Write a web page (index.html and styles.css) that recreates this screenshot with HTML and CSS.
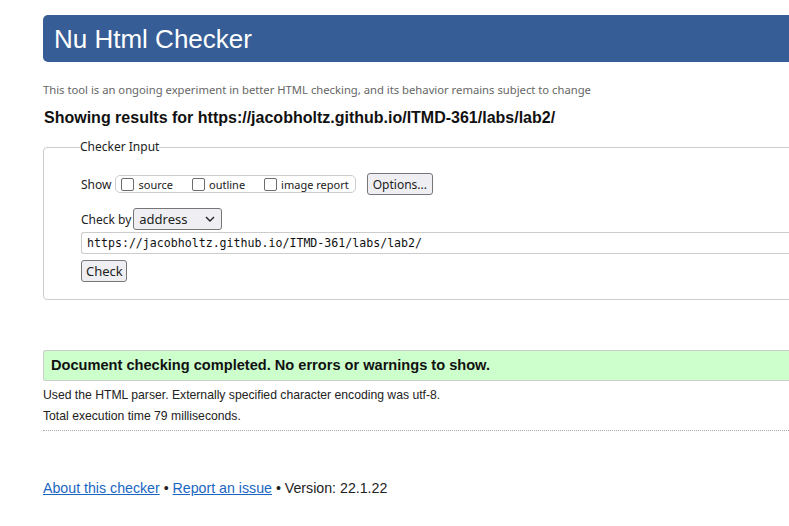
FILE: index.html
```html
<!DOCTYPE html>
<html>
<head>
<meta charset="utf-8">
<title>Nu Html Checker</title>
<link rel="stylesheet" href="styles.css">
</head>
<body>
<div class="page">
  <h1 class="banner">Nu Html Checker</h1>
  <p class="tagline">This tool is an ongoing experiment in better HTML checking, and its behavior remains subject to change</p>
  <h2 class="showing">Showing results for https://jacobholtz.github.io/ITMD-361/labs/lab2/</h2>
  <fieldset class="input-box">
    <legend>Checker Input</legend>
    <div class="row show-row">
      <span class="lbl">Show</span>
      <span class="opts">
        <label class="opt"><span class="cb"></span>source</label>
        <label class="opt"><span class="cb"></span>outline</label>
        <label class="opt"><span class="cb"></span>image report</label>
      </span>
      <span class="btn options">Options...</span>
    </div>
    <div class="row by-row">
      <span class="lbl">Check by</span>
      <span class="select">address<svg class="chev" width="10" height="6" viewBox="0 0 10 6"><path d="M1 1 L5 5 L9 1" fill="none" stroke="#222" stroke-width="1.4"/></svg></span>
    </div>
    <div class="url">https://jacobholtz.github.io/ITMD-361/labs/lab2/</div>
    <div class="row"><span class="btn check">Check</span></div>
  </fieldset>
  <p class="success">Document checking completed. No errors or warnings to show.</p>
  <p class="details">Used the HTML parser. Externally specified character encoding was utf-8.</p>
  <p class="details">Total execution time 79 milliseconds.</p>
  <hr class="dotted">
  <p class="footer"><a href="#">About this checker</a> &bull; <a href="#">Report an issue</a> &bull; Version: 22.1.22</p>
</div>
</body>
</html>
```
FILE: styles.css
```css
html, body { margin: 0; padding: 0; overflow: hidden; background: #fff; }
body { font-family: "Liberation Sans", Arial, sans-serif; color: #222; }
.page { width: 1000px; padding: 15px 0 0 43px; }
.banner {
  margin: 0; height: 47px; box-sizing: border-box;
  background: #365d95; color: #fff;
  border-radius: 5px 0 0 5px;
  font-weight: normal; font-size: 26px; line-height: 49px;
  padding-left: 11px;
}
.tagline {
  margin: 20px 0 0; font-family: "Noto Sans", sans-serif; font-size: 11.25px;
  color: #666; line-height: 16px;
}
.showing { margin: 10px 0 0; font-size: 16px; line-height: 20px; font-weight: bold; color: #111; padding-left: 1px; }
.input-box {
  margin: 11px 0 0; border: 1px solid #ccc; border-radius: 4px;
  padding: 18px 37px 17px; font-family: "Noto Sans", sans-serif; font-size: 12px; color: #222;
}
.input-box legend { padding: 0; margin-left: -1px; font-size: 12px; line-height: 16px; }
.row { display: flex; align-items: center; }
.lbl { margin-right: 2px; }
.show-row { height: 22px; }
.show-row .lbl { margin-right: 4px; }
.opts {
  display: flex; align-items: center; height: 18px; box-sizing: border-box;
  border: 1px solid #ccc; border-radius: 5px; padding: 0 6px 0 5px; margin-right: 11px;
  font-size: 11px;
}
.opt { display: flex; align-items: center; margin-right: 19px; }
.opt:last-child { margin-right: 0; }
.cb {
  width: 11px; height: 11px; border: 1px solid #6d6d6d; border-radius: 2px;
  margin-right: 4px; display: inline-block;
}
.btn {
  display: inline-flex; align-items: center; box-sizing: border-box;
  border: 1px solid #767676; border-radius: 3px; background: #efeff3;
  font-size: 12px; padding: 0 5px; height: 22px;
}
.by-row { margin-top: 13px; height: 22px; }
.select {
  display: inline-flex; align-items: center; justify-content: space-between; box-sizing: border-box;
  width: 89px; height: 22px; border: 1px solid #767676; border-radius: 3px; background: #efeff3;
  font-size: 13px; padding: 0 6px 0 5px;
}
.url {
  margin-top: 2px; height: 22px; box-sizing: border-box; border: 1px solid #ccc; border-right: none;
  border-radius: 3px 0 0 3px; margin-right: -40px;
  font-family: "DejaVu Sans Mono", monospace; font-size: 11.6px; line-height: 20px; padding-left: 5px; color: #111;
}
.check { margin-top: 6px; height: 22px; width: 46px; padding: 0 4px; font-size: 13px; }
.success {
  margin: 50px 0 0; height: 31px; box-sizing: border-box;
  background: #ccffcc; border: 1px solid #ccc; border-right: none; border-radius: 3px 0 0 3px;
  font-weight: bold; font-size: 14.6px; line-height: 29px; padding-left: 7px; color: #111;
}
.details { margin: 7px 0 0; font-size: 12.2px; line-height: 15px; color: #222; }
.details + .details { margin-top: 6px; }
.dotted { margin: 6px 0 0; border: none; border-top: 1px dotted #aaa; height: 0; }
.footer { margin: 48px 0 0; font-size: 14.2px; line-height: 18px; color: #222; }
.footer a { color: #1a66c2; }
```
